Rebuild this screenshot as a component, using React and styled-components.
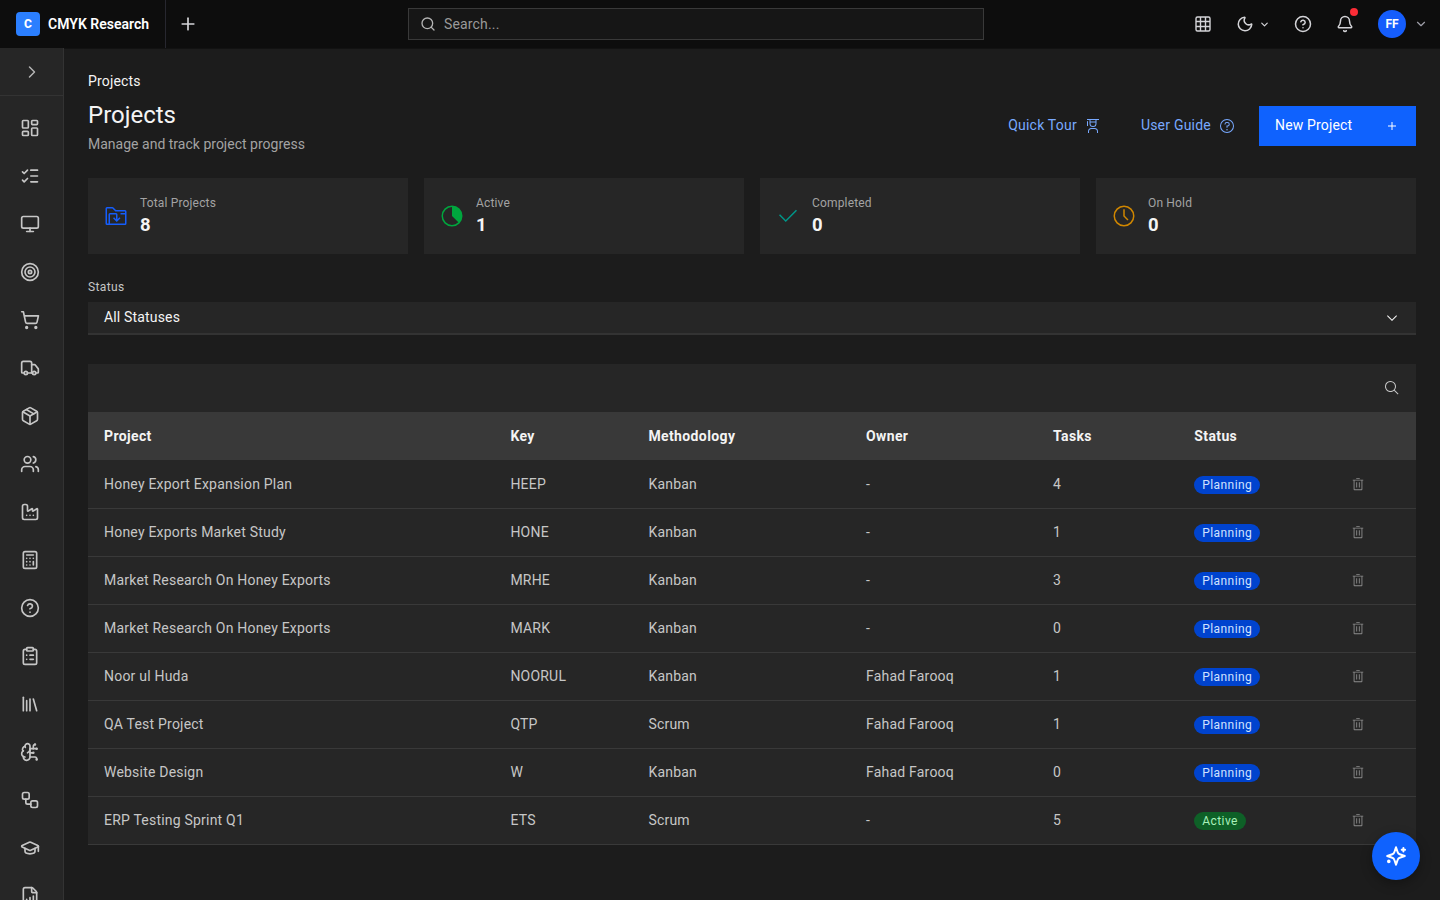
import React from 'react';
import styled, { createGlobalStyle, css } from 'styled-components';
import {
  LayoutDashboard, ListChecks, Monitor, Target, ShoppingCart, Truck, Package, Users, Factory,
  Calculator, CircleHelp, ClipboardList, Library, BrainCircuit, Workflow, GraduationCap,
  FileChartColumnIncreasing, ChevronRight, Plus, Search, Moon, ChevronDown, Bell,
} from 'lucide-react';

const GlobalStyle = createGlobalStyle`
  *, *::before, *::after { box-sizing: border-box; }
  html, body { margin: 0; padding: 0; background: #1c1c1c; overflow: hidden; }
  body { font-family: Roboto, "Liberation Sans", sans-serif; font-size: 14px; color: #f4f4f4; }
  button, input { font: inherit; letter-spacing: inherit; color: inherit; background: none; border: 0; padding: 0; margin: 0; }
  svg { display: block; flex: none; }
`;

const Page = styled.div`
  display: grid;
  grid-template-rows: 48px 852px;
  height: 900px;
  overflow: hidden;
`;

const Header = styled.header`
  display: grid;
  grid-template-columns: 408px 576px 1fr;
  align-items: center;
  background: #0d0d0d;
  box-shadow: 0 1px 0 #121212;
`;

const HeaderLeft = styled.div`
  display: flex;
  align-items: center;
  height: 48px;
`;

const Brand = styled.div`
  display: flex;
  align-items: center;
  gap: 8px;
  width: 166px;
  height: 48px;
  padding-left: 16px;
  border-right: 1px solid #27272f;
  font-weight: 600;
  font-size: 14px;
  letter-spacing: 0.02px;
  white-space: nowrap;
  color: #fff;
`;

const BrandMark = styled.span`
  display: flex;
  align-items: center;
  justify-content: center;
  width: 24px;
  height: 24px;
  border-radius: 4px;
  background: #2b7fff;
  font-size: 12px;
  font-weight: 800;
`;

const AddTab = styled.button`
  display: flex;
  margin-left: 12px;
  color: #d4d4d8;
`;

const SearchBox = styled.label`
  display: flex;
  align-items: center;
  gap: 8px;
  height: 32px;
  padding-left: 11px;
  border: 1px solid #393939;
  background: #161616;
  color: #9a9a9a;
  letter-spacing: 0.16px;

  svg { color: #b4b4b4; }
`;

const HeaderActions = styled.div`
  display: flex;
  align-items: center;
  justify-content: flex-end;
  padding-right: 12px;
  color: #d4d4d8;
`;

const IconButton = styled.button`
  display: flex;
  align-items: center;
  gap: ${(p) => p.$gap || 0}px;
  position: relative;
  margin-right: ${(p) => p.$after}px;
`;

const Dot = styled.i`
  position: absolute;
  top: -7px;
  right: -4px;
  width: 8px;
  height: 8px;
  border-radius: 50%;
  background: #fb2c36;
`;

const Avatar = styled.span`
  display: flex;
  align-items: center;
  justify-content: center;
  width: 28px;
  height: 28px;
  margin-right: 8px;
  border-radius: 50%;
  background: #155dfc;
  color: #fff;
  font-size: 12px;
  font-weight: 700;
`;

const Body = styled.div`
  display: grid;
  grid-template-columns: 64px 1fr;
  min-height: 0;
`;

const Sidebar = styled.nav`
  display: flex;
  flex-direction: column;
  overflow: hidden;
  border-right: 1px solid #333;
  background: #262626;
  color: #c6c6c6;
`;

const Toggle = styled.button`
  display: flex;
  flex: none;
  align-items: center;
  justify-content: center;
  height: 48px;
  margin-bottom: 8px;
  border-bottom: 1px solid #333;
  color: #b4b4b4;
`;

const NavItem = styled.a`
  display: flex;
  flex: none;
  align-items: center;
  height: 48px;
  padding-left: 20px;
`;

const Main = styled.main`
  padding: 24px 24px 0;
`;

const Crumb = styled.div`
  height: 18px;
  line-height: 18px;
  letter-spacing: 0.16px;
`;

const TitleBar = styled.div`
  display: flex;
  justify-content: space-between;
  height: 88px;
`;

const Title = styled.h1`
  margin: 9px 0 0;
  font-size: 24px;
  font-weight: 400;
  line-height: 32px;
`;

const Subtitle = styled.p`
  margin: 3px 0 0;
  color: #a3a3a3;
  line-height: 20px;
  letter-spacing: 0.01px;
`;

const Actions = styled.div`
  display: flex;
  align-items: center;
  height: 40px;
  margin-top: 16px;
`;

const GhostButton = styled.button`
  display: flex;
  align-items: center;
  gap: 8px;
  height: 40px;
  margin-right: ${(p) => p.$after}px;
  color: #78a9ff;
  letter-spacing: 0.22px;
`;

const PrimaryButton = styled.button`
  display: flex;
  align-items: center;
  justify-content: space-between;
  width: 157px;
  height: 40px;
  padding: 0 16px;
  background: #0f62fe;
  color: #fff;
  letter-spacing: 0.16px;
`;

const ButtonLabel = styled.span`
  padding-bottom: 2px;
`;

const Cards = styled.section`
  display: grid;
  grid-template-columns: repeat(4, 1fr);
  gap: 16px;
`;

const Card = styled.article`
  display: flex;
  align-items: center;
  gap: 12px;
  height: 76px;
  padding: 0 16px;
  background: #262626;
`;

const CardText = styled.div`
  padding-top: 2px;
`;

const CardLabel = styled.div`
  color: #a3a3a3;
  font-size: 12px;
  line-height: 16px;
  letter-spacing: 0.16px;
`;

const CardValue = styled.div`
  font-size: 18.5px;
  font-weight: 700;
  line-height: 28px;
`;

const FieldLabel = styled.div`
  margin-top: 24px;
  height: 24px;
  color: #c6c6c6;
  font-size: 12px;
  line-height: 18px;
  letter-spacing: 0.36px;
`;

const Select = styled.div`
  display: flex;
  align-items: center;
  justify-content: space-between;
  height: 33px;
  margin-bottom: 29px;
  padding: 0 16px;
  border-bottom: 2px solid #333;
  background: #262626;
  letter-spacing: 0.16px;
`;

const Toolbar = styled.div`
  display: flex;
  align-items: center;
  justify-content: flex-end;
  height: 48px;
  padding-right: 16px;
  background: #262626;
`;

const Table = styled.div`
  display: grid;
`;

const rowGrid = css`
  display: grid;
  grid-template-columns: 406.4px 138px 217.6px 187px 141.3px 153.7px 84px;
  align-items: center;
`;

const HeadRow = styled.div`
  ${rowGrid}
  height: 48px;
  background: #393939;
  font-weight: 700;
  letter-spacing: 0.38px;
`;

const Row = styled.div`
  ${rowGrid}
  height: 48px;
  border-top: 1px solid #393939;
  background: #262626;
  color: #c6c6c6;
  letter-spacing: 0.21px;

  &:nth-child(2) { border-top-color: #262626; }
  &:last-child { height: 49px; border-bottom: 1px solid #393939; }
`;

const Cell = styled.div`
  padding-left: ${(p) => (p.$icon ? 19.5 : 16)}px;
  margin-top: -1px;
  white-space: nowrap;
`;

const Tag = styled.span`
  display: flex;
  align-items: center;
  width: max-content;
  height: 18px;
  margin-top: 2px;
  padding: 0 8px;
  border-radius: 9px;
  background: ${(p) => (p.$active ? '#0e6027' : '#0043ce')};
  color: ${(p) => (p.$active ? '#a7f0ba' : '#d0e2ff')};
  font-size: 12px;
  letter-spacing: 0.42px;
`;

const Fab = styled.button`
  position: fixed;
  right: 20px;
  bottom: 20px;
  display: flex;
  align-items: center;
  justify-content: center;
  width: 48px;
  height: 48px;
  border-radius: 50%;
  background: #0f62fe;
  color: #fff;
  box-shadow: 0 4px 12px rgba(0, 0, 0, 0.3);
`;

const PATHS = {
  add: 'M17 15V8h-2v7H8v2h7v7h2v-7h7v-2z',
  check: 'M13 24l-9-9 1.414-1.414L13 21.171 26.586 7.586 28 9z',
  chevron: 'M16 22L6 12l1.4-1.4 8.6 8.6 8.6-8.6L26 12z',
  search: 'M29 27.586l-7.552-7.552a11.018 11.018 0 1 0-1.414 1.414L27.586 29ZM4 13a9 9 0 1 1 9 9 9.01 9.01 0 0 1-9-9Z',
  trash: 'M12 12h2v12h-2zM18 12h2v12h-2zM4 6v2h2v20a2 2 0 0 0 2 2h16a2 2 0 0 0 2-2V8h2V6zM8 28V8h16v20zM12 2h8v2h-8z',
  time: 'M16 30a14 14 0 1 1 14-14 14 14 0 0 1-14 14ZM16 4a12 12 0 1 0 12 12A12 12 0 0 0 16 4ZM20.59 22L15 16.41V7h2v8.58l5 5.01z',
  help: 'M16 2a14 14 0 1 0 14 14A14 14 0 0 0 16 2Zm0 26a12 12 0 1 1 12-12 12 12 0 0 1-12 12ZM16 22a1.5 1.5 0 1 0 0 3 1.5 1.5 0 0 0 0-3ZM17 8h-1.5a4.49 4.49 0 0 0-4.5 4.5v.5h2v-.5a2.5 2.5 0 0 1 2.5-2.5H17a2.5 2.5 0 0 1 0 5h-2v4.5h2V17a4.5 4.5 0 0 0 0-9Z',
  progress: 'M16 2a14 14 0 1 0 14 14A14 14 0 0 0 16 2Zm0 26a12 12 0 0 1 0-24v12l8.481 8.481A11.963 11.963 0 0 1 16 28Z',
  education: 'M26 30h-2v-3a5 5 0 0 0-5-5h-6a5 5 0 0 0-5 5v3H6v-3a7 7 0 0 1 7-7h6a7 7 0 0 1 7 7zM5 6a1 1 0 0 0-1 1v9h2V7a1 1 0 0 0-1-1zM4 2v2h5v7a7 7 0 0 0 14 0V4h5V2zm7 2h10v3H11zm5 12a5 5 0 0 1-5-5V9h10v2a5 5 0 0 1-5 5z',
  folder: 'M28 8H16l-3.4-3.4A2 2 0 0 0 11.17 4H4a2 2 0 0 0-2 2v20a2 2 0 0 0 2 2h24a2 2 0 0 0 2-2V10a2 2 0 0 0-2-2ZM4 6h7.17l4 4H28v2h-6v2h6v12H8V14h8v6.2l-2.6-2.6L12 19l5 5 5-5-1.4-1.4-2.6 2.6V14a2 2 0 0 0-2-2H8a2 2 0 0 0-2 2v12H4Z',
};

const Glyph = ({ name, size = 16, color = 'currentColor' }) => (
  <svg width={size} height={size} viewBox="0 0 32 32" fill={color} fillRule="nonzero">
    <path d={PATHS[name]} />
  </svg>
);

const GridIcon = () => (
  <svg width="18" height="18" viewBox="0 0 18 18" fill="none" stroke="currentColor" strokeWidth="1.4">
    <rect x="2" y="2" width="14" height="14" rx="1.5" />
    <path d="M6.5 2v14M11.5 2v14M2 6.5h14M2 11.5h14" />
  </svg>
);

const SparkIcon = () => (
  <svg width="24" height="24" viewBox="0 0 24 24" fill="none" stroke="currentColor" strokeWidth="2" strokeLinecap="round" strokeLinejoin="round">
    <path d="M12 3.2l1.7 5.1a3 3 0 0 0 2 2l5.1 1.7-5.1 1.7a3 3 0 0 0-2 2L12 20.8l-1.7-5.1a3 3 0 0 0-2-2L3.2 12l5.1-1.7a3 3 0 0 0 2-2z" />
    <path d="M19.4 4v3.4M17.7 5.7h3.4" />
    <circle cx="4.8" cy="17.4" r="1" fill="currentColor" strokeWidth="1.6" />
  </svg>
);

const NAV = [
  LayoutDashboard, ListChecks, Monitor, Target, ShoppingCart, Truck, Package, Users, Factory,
  Calculator, CircleHelp, ClipboardList, Library, BrainCircuit, Workflow, GraduationCap,
  FileChartColumnIncreasing,
];

const CARDS = [
  ['Total Projects', 8, 'folder', '#155dfc'],
  ['Active', 1, 'progress', '#00a63e'],
  ['Completed', 0, 'check', '#009689'],
  ['On Hold', 0, 'time', '#d08700'],
];

const COLUMNS = ['Project', 'Key', 'Methodology', 'Owner', 'Tasks', 'Status'];

const ROWS = [
  ['Honey Export Expansion Plan', 'HEEP', 'Kanban', '-', 4, 'Planning'],
  ['Honey Exports Market Study', 'HONE', 'Kanban', '-', 1, 'Planning'],
  ['Market Research On Honey Exports', 'MRHE', 'Kanban', '-', 3, 'Planning'],
  ['Market Research On Honey Exports', 'MARK', 'Kanban', '-', 0, 'Planning'],
  ['Noor ul Huda', 'NOORUL', 'Kanban', 'Fahad Farooq', 1, 'Planning'],
  ['QA Test Project', 'QTP', 'Scrum', 'Fahad Farooq', 1, 'Planning'],
  ['Website Design', 'W', 'Kanban', 'Fahad Farooq', 0, 'Planning'],
  ['ERP Testing Sprint Q1', 'ETS', 'Scrum', '-', 5, 'Active'],
];

export default function App() {
  return (
    <>
      <GlobalStyle />
      <Page>
        <Header>
          <HeaderLeft>
            <Brand><BrandMark>C</BrandMark>CMYK Research</Brand>
            <AddTab><Plus size={20} /></AddTab>
          </HeaderLeft>
          <SearchBox><Search size={16} />Search...</SearchBox>
          <HeaderActions>
            <IconButton $after={24}><GridIcon /></IconButton>
            <IconButton $after={24} $gap={5}><Moon size={18} /><ChevronDown size={11} strokeWidth={2.6} /></IconButton>
            <IconButton $after={24}><CircleHelp size={18} /></IconButton>
            <IconButton $after={24}><Bell size={18} /><Dot /></IconButton>
            <Avatar>FF</Avatar>
            <ChevronDown size={14} color="#9f9fa9" />
          </HeaderActions>
        </Header>
        <Body>
          <Sidebar>
            <Toggle><ChevronRight size={20} strokeWidth={1.75} /></Toggle>
            {NAV.map((Icon, i) => <NavItem key={i}><Icon size={20} /></NavItem>)}
          </Sidebar>
          <Main>
            <Crumb>Projects</Crumb>
            <TitleBar>
              <div>
                <Title>Projects</Title>
                <Subtitle>Manage and track project progress</Subtitle>
              </div>
              <Actions>
                <GhostButton $after={40}><ButtonLabel>Quick Tour</ButtonLabel><Glyph name="education" /></GhostButton>
                <GhostButton $after={24}><ButtonLabel>User Guide</ButtonLabel><Glyph name="help" /></GhostButton>
                <PrimaryButton><ButtonLabel>New Project</ButtonLabel><Glyph name="add" /></PrimaryButton>
              </Actions>
            </TitleBar>
            <Cards>
              {CARDS.map(([label, value, icon, color]) => (
                <Card key={label}>
                  <Glyph name={icon} size={24} color={color} />
                  <CardText>
                    <CardLabel>{label}</CardLabel>
                    <CardValue>{value}</CardValue>
                  </CardText>
                </Card>
              ))}
            </Cards>
            <FieldLabel>Status</FieldLabel>
            <Select><ButtonLabel>All Statuses</ButtonLabel><Glyph name="chevron" /></Select>
            <Toolbar><Glyph name="search" color="#c6c6c6" /></Toolbar>
            <Table>
              <HeadRow>{COLUMNS.map((c) => <Cell key={c}>{c}</Cell>)}</HeadRow>
              {ROWS.map(([project, key, method, owner, tasks, status]) => (
                <Row key={key}>
                  <Cell>{project}</Cell>
                  <Cell>{key}</Cell>
                  <Cell>{method}</Cell>
                  <Cell>{owner}</Cell>
                  <Cell>{tasks}</Cell>
                  <Cell><Tag $active={status === 'Active'}>{status}</Tag></Cell>
                  <Cell $icon><Glyph name="trash" size={14} color="#8d8d8d" /></Cell>
                </Row>
              ))}
            </Table>
          </Main>
        </Body>
        <Fab><SparkIcon /></Fab>
      </Page>
    </>
  );
}
